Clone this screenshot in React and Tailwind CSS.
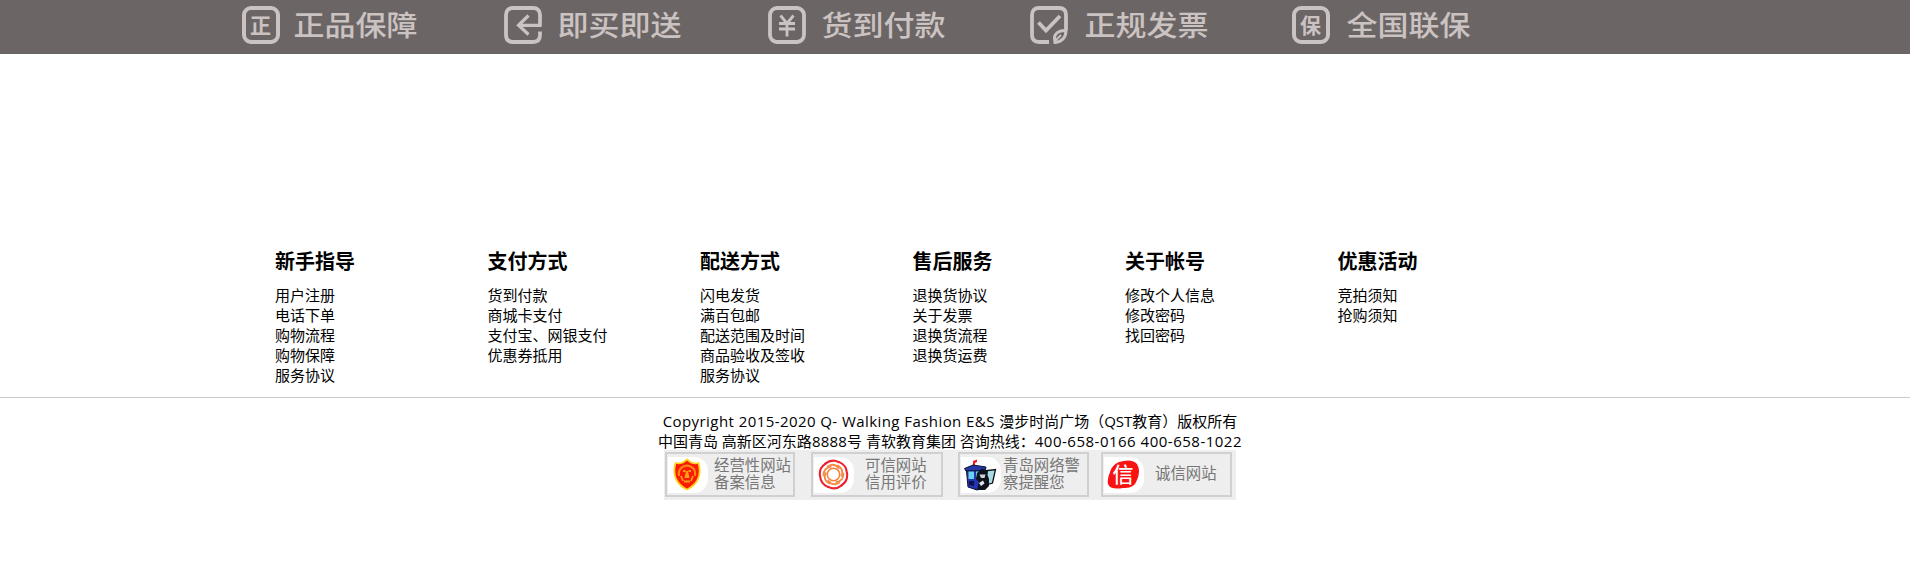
import React from "react";

const promises = [
  { label: "正品保障", icon: "genuine", width: "w-[262px]", inset: "ml-[14px]" },
  { label: "即买即送", icon: "deliver", width: "w-[264.5px]", inset: "ml-[16px]" },
  { label: "货到付款", icon: "yuan", width: "w-[261.5px]", inset: "ml-[15.5px]" },
  { label: "正规发票", icon: "invoice", width: "w-[262px]", inset: "ml-[17px]" },
  { label: "全国联保", icon: "warranty", width: "w-[200px]", inset: "ml-[17px]" },
];

const columns = [
  { title: "新手指导", items: ["用户注册", "电话下单", "购物流程", "购物保障", "服务协议"] },
  { title: "支付方式", items: ["货到付款", "商城卡支付", "支付宝、网银支付", "优惠券抵用"] },
  { title: "配送方式", items: ["闪电发货", "满百包邮", "配送范围及时间", "商品验收及签收", "服务协议"] },
  { title: "售后服务", items: ["退换货协议", "关于发票", "退换货流程", "退换货运费"] },
  { title: "关于帐号", items: ["修改个人信息", "修改密码", "找回密码"] },
  { title: "优惠活动", items: ["竞拍须知", "抢购须知"] },
];

function PromiseIcon({ name }) {
  if (name === "genuine" || name === "warranty") {
    return (
      <span className="flex size-[38px] shrink-0 items-center justify-center rounded-[9px] border-4 border-[#cbc2c2] text-[21px] leading-none font-bold">
        <span className="-mt-0.5">{name === "genuine" ? "正" : "保"}</span>
      </span>
    );
  }
  return (
    <svg className="size-[38px] shrink-0" viewBox="0 0 38 38" fill="none" stroke="#cbc2c2" strokeWidth="3.8">
      {name === "deliver" && (
        <>
          <path d="M36 20.500V9Q36 2 29 2H9Q2 2 2 9V29Q2 36 9 36H29Q36 36 36 29V25.500" />
          <path d="M37 19.300H15M24.500 9.500L14.500 19.300L24.500 28.500" strokeWidth="3.200" />
        </>
      )}
      {name === "yuan" && (
        <>
          <rect x="2" y="2" width="34" height="34" rx="7" />
          <path d="M12.500 9.500L19 17.500L25.500 9.500M11 17.500H27M11 23H27M19 17V30.500" strokeWidth="2.800" />
        </>
      )}
      {name === "invoice" && (
        <>
          <path d="M19 36H9Q2 36 2 29V9Q2 2 9 2H29Q36 2 36 9V24" />
          <path d="M8.500 16.500L16 24.500L30 10" />
          <path d="M36 24.500C29 24 24.500 27.500 24.500 32L25 36.500C32 36 36 31 36 24.500Z" strokeWidth="3" />
          <path d="M25 35L31 29" strokeWidth="1.800" />
        </>
      )}
    </svg>
  );
}

function Shield() {
  return (
    <svg className="h-[33px] w-[28px]" viewBox="0 0 28 33">
      <path d="M14 1.500L18 4.500Q22 6 25.500 5Q28 14 25 21Q21.500 28 14 31.500Q6.500 28 3 21Q0 14 2.500 5Q6 6 10 4.500Z" fill="#fb1a05" stroke="#ffd21c" strokeWidth="1.800" />
      <path d="M6 18Q4.500 9 14 7.500Q23.500 9 22 18" fill="none" stroke="#ff8a12" strokeWidth="2" />
      <path d="M10 12H12.500V14H10ZM15.500 12H18V14H15.500ZM13 13H15L16.500 20H11.500Z" fill="#ff9c18" />
      <path d="M8 18L10 23M20 18L18 23M11 23.500H17" fill="none" stroke="#ffa01a" strokeWidth="1.800" />
    </svg>
  );
}

function Swirl() {
  const turns = [0, 60, 120, 180, 240, 300];
  return (
    <svg className="size-[31px]" viewBox="0 0 30 30" fill="none" strokeLinecap="round">
      {turns.map((a) => (
        <g key={a} transform={`rotate(${a} 15 15)`}>
          <path d="M7 4.500Q13.500 -0.500 20 3" stroke="#ea2430" strokeWidth="2" />
          <path d="M9.500 7Q16 3.500 20 9" stroke="#f58a44" strokeWidth="1.800" />
        </g>
      ))}
      <circle cx="15" cy="15" r="6" stroke="#f4843c" strokeWidth="1.500" />
    </svg>
  );
}

function Police() {
  return (
    <svg className="h-8 w-[33px]" viewBox="0 0 33 32">
      <path d="M9 7V2L13 0.500V3L11 4V7Z" fill="#fa1818" />
      <path d="M0.500 9.500L9 6L22 8L21 12H2Z" fill="#2437a8" stroke="#0c1030" />
      <path d="M2.500 12H19V29L13 31L4 28Z" fill="#2234b0" stroke="#0c1030" />
      <path d="M4.500 12.500H10V20H4.500ZM12 12.500H18V18H12Z" fill="#69d2ee" />
      <path d="M20 12L31.500 10.500L28.500 24L22 26Z" fill="#a6dbe4" stroke="#11131c" strokeWidth="1.300" />
      <path d="M13 14L18 9.500L24 12L23.500 16L25 20L25 27L21 31H13L15 23L12 20Z" fill="#11131c" />
      <path d="M15.500 15.500H21.500L20.500 19H17Z" fill="#c8d6da" />
      <path d="M15 24L19 21.500L20.500 24.500L17 27Z" fill="#dfe6ea" />
      <path d="M5 22H10V27L5 26Z" fill="#0d124f" />
    </svg>
  );
}

function Seal() {
  return (
    <div className="grid h-[30px] w-[33px] place-items-center">
      <svg className="col-start-1 row-start-1 h-[30px] w-[33px]" viewBox="0 0 33 30">
        <path d="M12 2Q25 -2 30 4Q34 11 30 20Q27 29 16 28Q3 30 1 24Q0 19 3 12Q5 5 12 2Z" fill="#f81212" />
      </svg>
      <span className="col-start-1 row-start-1 text-[21px] leading-none font-medium text-white">信</span>
    </div>
  );
}

const badges = [
  { lines: ["经营性网站", "备案信息"], art: Shield, box: "w-[130px]", gap: "mr-4", inset: "ml-[6px]" },
  { lines: ["可信网站", "信用评价"], art: Swirl, box: "w-[132px]", gap: "mr-[15px]", inset: "ml-[11px]" },
  { lines: ["青岛网络警", "察提醒您"], art: Police, box: "w-[131px]", gap: "mr-[12px]", inset: "ml-[2px]" },
  { lines: ["诚信网站"], art: Seal, box: "w-[131px]", gap: "", inset: "ml-[11px]" },
];

export default function App() {
  return (
    <div className="h-[568px] w-full overflow-hidden bg-white font-['Open_Sans','Noto_Sans_CJK_SC',sans-serif] text-[15px] text-black">
      <div className="flex h-[54px] bg-[#6b6665] pt-1.5 pl-[241.5px] font-['Noto_Sans_CJK_SC',sans-serif] text-[#cbc2c2]">
        {promises.map((p) => (
          <div key={p.label} className={`flex h-[38px] shrink-0 items-center ${p.width}`}>
            <PromiseIcon name={p.icon} />
            <span className={`mb-0.5 scale-y-[0.92] text-[31px] leading-[36px] font-medium whitespace-nowrap ${p.inset}`}>{p.label}</span>
          </div>
        ))}
      </div>

      <div className="flex h-[344px] border-b border-[#ccc] pt-[193px] pl-[275px]">
        {columns.map((c) => (
          <div key={c.title} className="w-[212.5px] shrink-0">
            <h3 className="mb-[7px] h-[31px] text-[20px] leading-[30px] font-bold">{c.title}</h3>
            <ul>
              {c.items.map((item) => (
                <li key={item} className="h-5 leading-5">{item}</li>
              ))}
            </ul>
          </div>
        ))}
      </div>

      <div className="flex flex-col items-center pt-[13px] pr-[10px]">
        <p className="h-5 leading-5 whitespace-nowrap">
          <span className="tracking-[0.43px]">Copyright 2015-2020 Q- Walking Fashion E&amp;S </span>漫步时尚广场（QST教育）版权所有
        </p>
        <p className="h-5 leading-5 whitespace-nowrap">
          中国青岛 高新区河东路<span className="tracking-[0.2px]">8888</span>号 青软教育集团 咨询热线：
          <span className="tracking-[0.5px]">400-658-0166 400-658-1022</span>
        </p>
      </div>
      <div className="mt-[-1px] ml-[664px] flex h-[50px] w-[572px] bg-[#eee] pt-[2px] pl-px">
        {badges.map((b) => (
          <div key={b.lines[0]} className={`flex h-[45px] shrink-0 items-center border-2 border-[#d0d0d0] pl-px ${b.box} ${b.gap}`}>
            <div className="flex h-9 w-10 shrink-0 items-center justify-center rounded-r-[14px] bg-white pr-0.5">
              <b.art />
            </div>
            <div className={`text-[15.4px] leading-[16.5px] whitespace-nowrap text-[#777] ${b.inset}`}>
              {b.lines.map((l) => (
                <div key={l}>{l}</div>
              ))}
            </div>
          </div>
        ))}
      </div>
    </div>
  );
}
